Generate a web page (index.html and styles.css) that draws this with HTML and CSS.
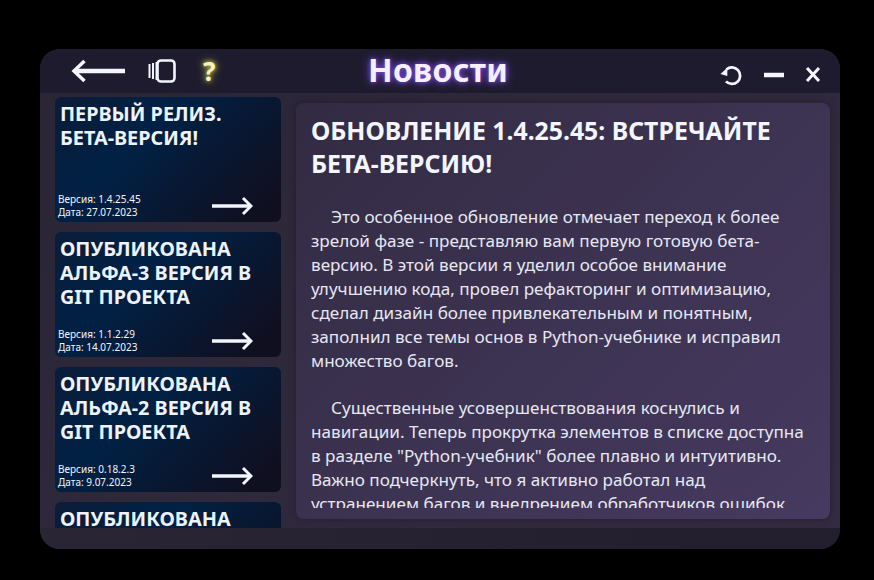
FILE: index.html
```html
<!DOCTYPE html>
<html lang="ru">
<head>
    <meta charset="UTF-8">
    <title>Новости</title>
    <link rel="stylesheet" href="styles.css">
</head>
<body>
    <div class="window">
        <header class="topbar">
            <div class="topbar-left">
                <svg class="icon-back" width="56" height="26" viewBox="0 0 56 26"><path d="M55 13H6" fill="none" stroke="#f3f6ff" stroke-width="4.500"/><path d="M14.500 3L4 13l10.500 10" fill="none" stroke="#f3f6ff" stroke-width="3.500"/></svg>
                <svg class="icon-panel" width="28" height="24" viewBox="0 0 28 24"><path d="M1.500 5v14M5 4v16M8.500 3v18" fill="none" stroke="#f3f6ff" stroke-width="2"/><rect x="9.500" y="1.500" width="17" height="21" rx="3.500" fill="#1e1b2e" stroke="#f3f6ff" stroke-width="2.600"/></svg>
                <span class="help">?</span>
            </div>
            <h1 class="title">Новости</h1>
            <div class="topbar-right">
                <svg class="icon-refresh" width="22" height="22" viewBox="0 0 24 24"><path d="M7 6A9 9 0 1 1 6.500 19" fill="none" stroke="#f3f6ff" stroke-width="3"/><path d="M0.500 11L8 4v9z" fill="#f3f6ff"/></svg>
                <svg width="20" height="22" viewBox="0 0 20 22"><path d="M0 11h20" stroke="#f3f6ff" stroke-width="4.500"/></svg>
                <svg width="16" height="22" viewBox="0 0 16 22"><path d="M2 4l12 13M14 4L2 17" stroke="#f3f6ff" stroke-width="3"/></svg>
            </div>
        </header>
        <main class="body">
            <section class="news-list">
                <article class="card">
                    <h2>ПЕРВЫЙ РЕЛИЗ. БЕТА-ВЕРСИЯ!</h2>
                    <div class="card-foot">
                        <p>Версия: 1.4.25.45<br>Дата: 27.07.2023</p>
                        <svg width="43" height="20" viewBox="0 0 43 20"><path d="M2 10h38" fill="none" stroke="#f3f6ff" stroke-width="3.500"/><path d="M33 2l8 8-8 8" fill="none" stroke="#f3f6ff" stroke-width="3"/></svg>
                    </div>
                </article>
                <article class="card">
                    <h2>ОПУБЛИКОВАНА АЛЬФА-3 ВЕРСИЯ В GIT ПРОЕКТА</h2>
                    <div class="card-foot">
                        <p>Версия: 1.1.2.29<br>Дата: 14.07.2023</p>
                        <svg width="43" height="20" viewBox="0 0 43 20"><path d="M2 10h38" fill="none" stroke="#f3f6ff" stroke-width="3.500"/><path d="M33 2l8 8-8 8" fill="none" stroke="#f3f6ff" stroke-width="3"/></svg>
                    </div>
                </article>
                <article class="card">
                    <h2>ОПУБЛИКОВАНА АЛЬФА-2 ВЕРСИЯ В GIT ПРОЕКТА</h2>
                    <div class="card-foot">
                        <p>Версия: 0.18.2.3<br>Дата: 9.07.2023</p>
                        <svg width="43" height="20" viewBox="0 0 43 20"><path d="M2 10h38" fill="none" stroke="#f3f6ff" stroke-width="3.500"/><path d="M33 2l8 8-8 8" fill="none" stroke="#f3f6ff" stroke-width="3"/></svg>
                    </div>
                </article>
                <article class="card">
                    <h2>ОПУБЛИКОВАНА</h2>
                </article>
            </section>
            <section class="article">
                <h2>ОБНОВЛЕНИЕ 1.4.25.45: ВСТРЕЧАЙТЕ БЕТА-ВЕРСИЮ!</h2>
                <div class="article-text">
                    <p>Это особенное обновление отмечает переход к более зрелой фазе - представляю вам первую готовую бета-версию. В этой версии я уделил особое внимание улучшению кода, провел рефакторинг и оптимизацию, сделал дизайн более привлекательным и понятным, заполнил все темы основ в Python-учебнике и исправил множество багов.</p>
                    <p>Существенные усовершенствования коснулись и навигации. Теперь прокрутка элементов в списке доступна в разделе "Python-учебник" более плавно и интуитивно. Важно подчеркнуть, что я активно работал над устранением багов и внедрением обработчиков ошибок</p>
                </div>
            </section>
        </main>
        <div class="bottombar"></div>
    </div>
</body>
</html>
```

FILE: styles.css
```css
html, body {
    margin: 0;
    height: 100%;
    background: #000;
}
body {
    padding: 49px 34px 31px 40px;
    box-sizing: border-box;
    font-family: "Noto Sans", "Open Sans", sans-serif;
    color: #f3f6ff;
}
.window {
    height: 500px;
    border-radius: 20px;
    overflow: hidden;
    display: flex;
    flex-direction: column;
    background: #2a2536;
}
.topbar {
    height: 44px;
    flex: none;
    display: flex;
    align-items: center;
    justify-content: space-between;
    position: relative;
    background: #1e1b2e;
    padding: 0 19px 0 30px;
}
.topbar-left, .topbar-right {
    display: flex;
    align-items: center;
}
.topbar-left {
    gap: 22px;
}
.topbar-right {
    gap: 21px;
    margin-top: 8px;
}
.icon-refresh {
    margin-right: 1px;
}
.help {
    font-size: 26px;
    font-weight: 700;
    color: #f4f2c0;
    text-shadow: 0 0 8px #c9c540, 0 0 4px #c9c540;
    margin-left: 5px;
}
.title {
    position: absolute;
    left: 328px;
    top: 0;
    margin: 0;
    font-size: 32px;
    letter-spacing: 0.300px;
    line-height: 41px;
    font-weight: 700;
    color: #f4f0ff;
    text-shadow: 0 0 10px #7a4ce0, 0 0 4px #7a4ce0;
}
.body {
    flex: 1;
    min-height: 0;
    display: flex;
    background: linear-gradient(135deg, #2a2636, #342b42);
}
.news-list {
    width: 226px;
    height: 431px;
    margin: 4px 0 0 15px;
    overflow: hidden;
    flex: none;
}
.card {
    height: 125px;
    box-sizing: border-box;
    margin-bottom: 10px;
    padding: 5px 5px 3px 5px;
    border-radius: 6px;
    background: linear-gradient(135deg, #0b1c38 0, #002145 35%, #100f20 90%);
    display: flex;
    flex-direction: column;
    justify-content: space-between;
}
.card h2 {
    margin: 0;
    font-size: 19.800px;
    line-height: 24px;
    font-weight: 700;
    color: #eef3fb;
}
.card-foot {
    display: flex;
    align-items: center;
    justify-content: space-between;
    padding-right: 23px;
    margin-left: -2px;
}
.card-foot p {
    margin: 0;
    font-size: 10px;
    line-height: 13px;
}
.article {
    margin: 10px 10px 10px 15px;
    padding: 11px 15px 0;
    width: 534px;
    height: 416px;
    box-sizing: border-box;
    overflow: hidden;
    border-radius: 8px;
    background: linear-gradient(135deg, #332b43, #463a60);
    box-shadow: 0 0 6px #221e2c;
    flex: none;
}
.article h2 {
    margin: 0 0 25px;
    font-size: 24.800px;
    line-height: 33px;
    font-weight: 700;
    color: #f3f6ff;
}
.article-text {
    height: 303px;
    overflow: hidden;
}
.article-text p {
    margin: 0 0 23px;
    font-size: 17.100px;
    line-height: 24px;
    text-indent: 20px;
    color: #e6e8f2;
}
.bottombar {
    height: 21px;
    flex: none;
    background: linear-gradient(90deg, #2a2535, #221e2e);
}
```
